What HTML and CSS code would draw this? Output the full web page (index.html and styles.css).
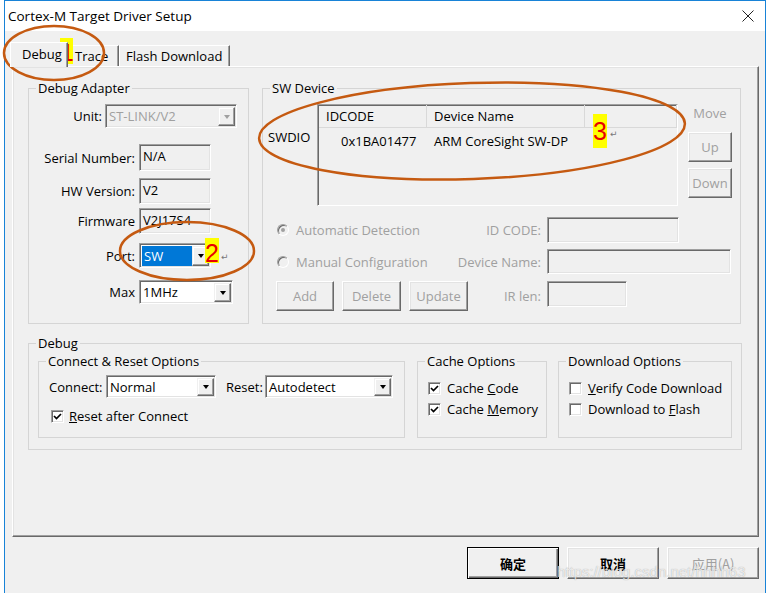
FILE: index.html
```html
<!DOCTYPE html>
<html>
<head>
<meta charset="utf-8">
<title>Cortex-M Target Driver Setup</title>
<link rel="stylesheet" href="styles.css">
</head>
<body>
<div class="window">
  <div class="titlebar">
    <span class="title">Cortex-M Target Driver Setup</span>
    <svg class="close" width="12" height="12" viewBox="0 0 12 12"><path d="M0.5 0.5L11.5 11.5M11.5 0.5L0.5 11.5"/></svg>
  </div>

  <div class="client">
    <!-- tab strip -->
    <div class="tabs">
      <div class="tab active">Debug</div>
      <div class="tab">Trace</div>
      <div class="tab">Flash Download</div>
    </div>

    <div class="page">
      <div class="row-top">
        <!-- Debug Adapter -->
        <div class="group adapter">
          <div class="gtitle">Debug Adapter</div>
          <div class="field f-unit">
            <span class="lbl lbl-unit">Unit:</span>
            <div class="combo disabled w-unit"><span class="val">ST-LINK/V2</span><span class="drop"></span></div>
          </div>
          <div class="field f-serial">
            <span class="lbl">Serial Number:</span>
            <div class="tbox">N/A</div>
          </div>
          <div class="field f-hw">
            <span class="lbl">HW Version:</span>
            <div class="tbox">V2</div>
          </div>
          <div class="field f-fw">
            <span class="lbl">Firmware</span>
            <div class="tbox">V2J17S4</div>
          </div>
          <div class="field f-port">
            <span class="lbl">Port:</span>
            <div class="combo w-port"><span class="val"><span class="sel">SW</span></span><span class="drop"></span></div>
          </div>
          <div class="field f-max">
            <span class="lbl">Max</span>
            <div class="combo w-max"><span class="val">1MHz</span><span class="drop"></span></div>
          </div>
        </div>

        <!-- SW Device -->
        <div class="group swdev">
          <div class="gtitle">SW Device</div>
          <div class="sw-top">
            <div class="swdio">SWDIO</div>
            <div class="list">
              <div class="lhead">
                <div class="c1">IDCODE</div>
                <div class="c2">Device Name</div>
                <div class="c3"></div>
              </div>
              <div class="lrow">
                <div class="c1 idc">0x1BA01477</div>
                <div class="c2">ARM CoreSight SW-DP</div>
              </div>
            </div>
            <div class="move">
              <div class="move-lbl">Move</div>
              <div class="btn raised dim mv">Up</div>
              <div class="btn raised dim mv mv-down">Down</div>
            </div>
          </div>
          <div class="sw-lower">
            <div class="opt"><span class="radio on"></span>Automatic Detection</div>
            <div class="slbl">ID CODE:</div>
            <div class="sunken sin w-id"></div>

            <div class="opt"><span class="radio"></span>Manual Configuration</div>
            <div class="slbl">Device Name:</div>
            <div class="sunken sin w-name"></div>

            <div class="sbtns">
              <div class="btn raised dim b-add">Add</div>
              <div class="btn raised dim b-del">Delete</div>
              <div class="btn raised dim b-del">Update</div>
            </div>
            <div class="slbl">IR len:</div>
            <div class="sunken sin w-ir"></div>
          </div>
        </div>
      </div>

      <!-- Debug -->
      <div class="group debug">
        <div class="gtitle">Debug</div>
        <div class="debug-row">
          <div class="group cr">
            <div class="gtitle">Connect &amp; Reset Options</div>
            <div class="cr-line">
              <span class="lbl-connect">Connect:</span>
              <div class="combo w-connect"><span class="val">Normal</span><span class="drop"></span></div>
              <span class="lbl-reset">Reset:</span>
              <div class="combo w-reset"><span class="val">Autodetect</span><span class="drop"></span></div>
            </div>
            <div class="check cr-check"><span class="chk on"><svg width="9" height="9" viewBox="0 0 9 9"><path d="M1 4L3.5 6.5L8 2"/></svg></span><span><u>R</u>eset after Connect</span></div>
          </div>
          <div class="group cache">
            <div class="gtitle">Cache Options</div>
            <div class="checks">
              <div class="check"><span class="chk on"><svg width="9" height="9" viewBox="0 0 9 9"><path d="M1 4L3.5 6.5L8 2"/></svg></span><span>Cache <u>C</u>ode</span></div>
              <div class="check"><span class="chk on"><svg width="9" height="9" viewBox="0 0 9 9"><path d="M1 4L3.5 6.5L8 2"/></svg></span><span>Cache <u>M</u>emory</span></div>
            </div>
          </div>
          <div class="group dl">
            <div class="gtitle">Download Options</div>
            <div class="checks">
              <div class="check"><span class="chk"></span><span><u>V</u>erify Code Download</span></div>
              <div class="check"><span class="chk"></span><span>Download to <u>F</u>lash</span></div>
            </div>
          </div>
        </div>
      </div>
    </div>

    <div class="footer">
      <div class="btn cn default">确定</div>
      <div class="btn cn raised">取消</div>
      <div class="btn cn raised dim light">应用(A)</div>
    </div>
  </div>
</div>

<!-- annotations drawn on top of the screenshot -->
<svg class="marks" width="768" height="593">
  <g fill="none" stroke="#c55a11" stroke-width="2.5">
    <ellipse cx="54" cy="53" rx="50" ry="27"/>
    <ellipse cx="187" cy="251" rx="67" ry="29"/>
    <ellipse cx="472" cy="131" rx="213" ry="48" transform="rotate(-2 472 131)"/>
  </g>
</svg>
<span class="num n1">1</span>
<span class="num n2">2</span>
<span class="num n3">3</span>
<span class="ret r2">↵</span>
<span class="ret r3">↵</span>
<span class="watermark">https://blog.csdn.net/hhhh63</span>
</body>
</html>
```

FILE: styles.css
```css
* {
  box-sizing: border-box;
}

body {
  margin: 0;
  width: 768px;
  height: 593px;
  overflow: hidden;
  position: relative;
  background: #fff;
  font-family: "Open Sans", "Noto Sans CJK SC", sans-serif;
  font-size: 13px;
  color: #000;
}

.window {
  margin-left: 4px;
  width: 762px;
  height: 593px;
  border: 1px solid #1883d7;
  border-bottom: 0;
  background: #f0f0f0;
}

.titlebar {
  height: 30px;
  background: #fff;
  display: flex;
  align-items: center;
  justify-content: space-between;
  padding: 0 11px 0 3px;
}

.title {
  font-size: 13.5px;
}

.close path {
  stroke: #222;
  stroke-width: 1;
  fill: none;
}

.client {
  padding: 11px 6px 0 7px;
}

/* 3d borders */
.raised {
  border: 1px solid;
  border-color: #fff #696969 #696969 #fff;
  box-shadow: inset -1px -1px 0 #a0a0a0, inset 1px 1px 0 #e3e3e3;
  background: #f0f0f0;
}

.sunken {
  border: 1px solid;
  border-color: #a0a0a0 #fff #fff #a0a0a0;
  box-shadow: inset 1px 1px 0 #696969, inset -1px -1px 0 #e3e3e3;
  background: #f0f0f0;
}

/* tabs */
.tabs {
  display: flex;
  align-items: flex-end;
  height: 24px;
}

.tab {
  height: 21px;
  line-height: 20px;
  padding: 0 6px;
  border-top: 1px solid #fff;
  border-left: 1px solid #fff;
  border-right: 1px solid #696969;
  box-shadow: inset -1px 0 0 #a0a0a0;
}

.tab.active {
  position: relative;
  z-index: 2;
  width: 58px;
  height: 25px;
  margin-left: -2px;
  margin-bottom: -1px;
  padding-left: 11px;
  line-height: 22px;
  background: #f0f0f0;
}

.tab:nth-child(2) {
  width: 51px;
  border-left: 0;
  padding-left: 7px;
}

.tab:nth-child(3) {
  width: 111px;
}

.page {
  height: 471px;
  padding: 21px 0 0 15px;
  border: 1px solid;
  border-color: #fff #696969 #696969 #fff;
  box-shadow: inset -1px -1px 0 #a0a0a0, inset 1px 1px 0 #e3e3e3;
}

/* group boxes */
.group {
  border: 1px solid #d5d5d5;
}

.gtitle {
  width: fit-content;
  height: 18px;
  line-height: 18px;
  margin: -10px 0 0 7px;
  padding: 0 2px;
  background: #f0f0f0;
}

.row-top {
  display: flex;
  gap: 13px;
}

.adapter {
  width: 221px;
  height: 236px;
}

.field {
  display: flex;
  align-items: center;
}

.lbl {
  width: 110px;
  padding-right: 4px;
  text-align: right;
}

.lbl.lbl-unit {
  width: 76px;
  padding-right: 3px;
}

.f-unit { margin-top: 7px; }
.f-serial { margin-top: 16px; }
.f-hw { margin-top: 7px; }
.f-fw { margin-top: 4px; }
.f-port { margin-top: 9px; }
.f-max { margin-top: 12px; }

.tbox {
  width: 72px;
  height: 26px;
  line-height: 22px;
  padding-left: 3px;
  border: 1px solid;
  border-color: #a0a0a0 #fff #fff #a0a0a0;
  box-shadow: inset 1px 1px 0 #696969, inset -1px -1px 0 #e3e3e3;
}

.f-serial .tbox { height: 27px; }

/* combo boxes */
.combo {
  display: flex;
  height: 24px;
  padding: 2px 1px 1px 2px;
  background: #fff;
  border: 1px solid;
  border-color: #a0a0a0 #fff #fff #a0a0a0;
  box-shadow: inset 1px 1px 0 #696969, inset -1px -1px 0 #e3e3e3;
}

.combo .val {
  flex: 1;
  line-height: 18px;
  padding-left: 1px;
  white-space: nowrap;
}

.combo .drop {
  width: 17px;
  display: flex;
  align-items: center;
  justify-content: center;
  border: 1px solid;
  border-color: #f0f0f0 #696969 #696969 #f0f0f0;
  box-shadow: inset -1px -1px 0 #a0a0a0, inset 1px 1px 0 #fff;
  background: #f0f0f0;
}

.combo .drop::after {
  content: "";
  border-left: 3px solid transparent;
  border-right: 3px solid transparent;
  border-top: 4px solid #000;
}

.combo.disabled {
  background: #f0f0f0;
  color: #a0a0a0;
}

.combo.disabled .drop::after {
  border-top-color: #a0a0a0;
}

.w-unit { width: 132px; }
.w-port { width: 72px; height: 25px; }
.w-max { width: 94px; }
.w-connect { width: 110px; height: 23px; }
.w-reset { width: 128px; height: 23px; }

.w-port .val {
  padding-left: 0;
}

.sel {
  display: block;
  width: 50px;
  height: 20px;
  line-height: 20px;
  padding-left: 2px;
  background: #0078d7;
  color: #fff;
}

/* SW Device */
.swdev {
  width: 479px;
  height: 236px;
}

.sw-top {
  display: flex;
  margin-top: 7px;
}

.swdio {
  width: 54px;
  padding: 24px 0 0 5px;
}

.list {
  width: 361px;
  height: 102px;
  border: 1px solid;
  border-color: #a0a0a0 #fff #fff #a0a0a0;
  box-shadow: inset 1px 1px 0 #696969;
}

.lhead {
  display: flex;
  height: 23px;
  margin-left: 1px;
  border-bottom: 1px solid #d9d9d9;
}

.lhead div {
  border-right: 1px solid #d9d9d9;
  line-height: 22px;
  padding-left: 7px;
}

.c1 { width: 108px; }
.c2 { width: 158px; }
.c3 { width: 92px; }

.lrow {
  display: flex;
  margin: 3px 0 0 1px;
  line-height: 20px;
}

.lrow div {
  padding-left: 7px;
}

.lrow .idc {
  padding-left: 22px;
}

.move {
  width: 44px;
  margin-left: 10px;
}

.move-lbl {
  line-height: 18px;
  text-align: center;
  color: #a0a0a0;
}

.btn {
  display: flex;
  align-items: center;
  justify-content: center;
  flex-shrink: 0;
}

.dim {
  color: #a0a0a0;
}

.mv {
  height: 30px;
  margin-top: 10px;
}

.mv.mv-down {
  margin-top: 6px;
}

.sw-lower {
  display: grid;
  grid-template-columns: 190px 88px 1fr;
  grid-template-rows: 26px 26px 30px;
  row-gap: 6px;
  margin-top: 11px;
}

.opt {
  display: flex;
  align-items: center;
  gap: 7px;
  padding-left: 14px;
  color: #a0a0a0;
  white-space: nowrap;
}

.radio {
  flex-shrink: 0;
  width: 12px;
  height: 12px;
  border-radius: 50%;
  border: 1px solid;
  border-color: #a0a0a0 #fff #fff #a0a0a0;
  box-shadow: inset 1px 1px 0 #696969;
  background: #f0f0f0;
  display: flex;
  align-items: center;
  justify-content: center;
}

.radio.on::after {
  content: "";
  width: 4px;
  height: 4px;
  border-radius: 50%;
  background: #a0a0a0;
}

.slbl {
  align-self: center;
  text-align: right;
  white-space: nowrap;
  color: #a0a0a0;
}

.sin {
  margin-left: 6px;
}

.w-id { width: 132px; }
.w-name { width: 184px; height: 25px; }
.w-ir { width: 80px; height: 26px; }

.sbtns {
  display: flex;
  gap: 8px;
  padding-left: 13px;
}

.b-add { width: 58px; }
.b-del { width: 59px; }

/* Debug */
.debug {
  width: 714px;
  height: 107px;
  margin-top: 19px;
}

.debug-row {
  display: flex;
  margin: 9px 0 0 9px;
}

.debug-row .group {
  height: 77px;
}

.cr { width: 367px; }
.cache { width: 130px; margin-left: 12px; }
.dl { width: 174px; margin-left: 11px; }

.cr-line {
  display: flex;
  align-items: center;
  margin-top: 5px;
  padding-left: 10px;
}

.lbl-connect {
  width: 57px;
}

.lbl-reset {
  width: 39px;
  margin-left: 10px;
}

.check {
  display: flex;
  align-items: center;
  height: 18px;
  white-space: nowrap;
}

.cr-check {
  margin-top: 9px;
  padding-left: 12px;
  gap: 5px;
}

.checks {
  display: flex;
  flex-direction: column;
  gap: 3px;
  margin-top: 9px;
  padding-left: 10px;
}

.checks .check {
  gap: 6px;
}

.chk {
  flex-shrink: 0;
  width: 13px;
  height: 13px;
  display: flex;
  align-items: center;
  justify-content: center;
  background: #fff;
  border: 1px solid;
  border-color: #a0a0a0 #fff #fff #a0a0a0;
  box-shadow: inset 1px 1px 0 #696969, inset -1px -1px 0 #e3e3e3;
}

.chk path {
  fill: none;
  stroke: #000;
  stroke-width: 1.7;
}

/* bottom buttons */
.footer {
  display: flex;
  justify-content: flex-end;
  gap: 8px;
  margin-top: 10px;
}

.footer .btn {
  width: 92px;
  height: 32px;
}

.cn {
  font-family: "Noto Sans CJK SC", sans-serif;
  font-weight: bold;
  font-size: 13px;
}

.cn.light {
  font-weight: normal;
}

.default {
  border: 1px solid #000;
  box-shadow: inset 1px 1px 0 #fff, inset -1px -1px 0 #696969, inset -2px -2px 0 #a0a0a0;
  background: #f0f0f0;
}

/* annotations */
.marks {
  position: absolute;
  left: 0;
  top: 0;
  pointer-events: none;
}

.num {
  position: absolute;
  background: #ffff00;
  color: #e80000;
  font-family: "Liberation Sans", sans-serif;
  font-size: 25px;
  text-align: center;
  overflow: visible;
}

.n1 { left: 60px; top: 38px; width: 13px; height: 26px; line-height: 31px; font-family: "DejaVu Sans", sans-serif; font-size: 23px; }
.n2 { left: 205px; top: 238px; width: 14px; height: 25px; line-height: 31px; }
.n3 { left: 593px; top: 114px; width: 14px; height: 34px; line-height: 35px; }

.ret {
  position: absolute;
  font-family: "DejaVu Sans", sans-serif;
  font-size: 9px;
  color: #777;
}

.r2 { left: 221px; top: 252px; }
.r3 { left: 610px; top: 129px; }

.watermark {
  position: absolute;
  left: 557px;
  top: 563px;
  font-family: "Liberation Sans", sans-serif;
  font-size: 15px;
  color: rgba(255, 255, 255, 0.75);
  text-shadow: 0 0 1px rgba(0, 0, 0, 0.35);
}
```
